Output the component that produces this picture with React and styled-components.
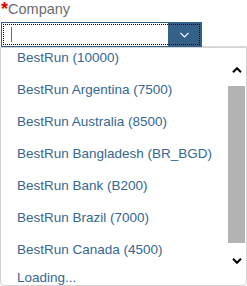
import styled, { createGlobalStyle } from 'styled-components'

const GlobalStyle = createGlobalStyle`
  html, body {
    margin: 0;
    padding: 0;
    background: #ffffff;
  }
  body {
    font-family: "Liberation Sans", Arial, sans-serif;
  }
`

const Field = styled.div`
  width: 247px;
  height: 286px;
  overflow: hidden;
  display: flex;
  flex-direction: column;
`

const Label = styled.label`
  display: flex;
  align-items: flex-start;
  height: 22px;
  padding-left: 1px;
  box-sizing: border-box;
  padding-top: 1px;
  font-size: 14.5px;
  line-height: 17px;
  color: #6a6d70;
`

const Required = styled.span`
  color: #e00000;
  font-size: 18px;
  font-weight: bold;
  line-height: 18px;
  margin-top: -1px;
`

const ComboRow = styled.div`
  display: flex;
  align-items: flex-end;
`

const ComboBox = styled.div`
  display: flex;
  width: 199px;
  height: 23px;
  margin-left: 1px;
  border: 1px solid #346187;
  background: #ffffff;
  outline: 1px dotted #000000;
  outline-offset: -3px;
`

const Input = styled.div`
  flex: 1;
  display: flex;
  align-items: center;
  padding-left: 9px;
`

const Caret = styled.span`
  width: 1px;
  height: 15px;
  background: #6a6d70;
`

const ArrowButton = styled.div`
  width: 33px;
  display: flex;
  align-items: center;
  justify-content: center;
  background: #346187;
`

const Rule = styled.div`
  flex: 1;
  height: 1px;
  background: #dcdcdc;
`

const Popup = styled.div`
  display: flex;
  width: 245px;
  height: 237px;
  border: 1px solid #d4d4d4;
  border-radius: 0 0 4px 4px;
  background: #ffffff;
  overflow: hidden;
`

const List = styled.ul`
  flex: 1;
  list-style: none;
  margin: 0;
  padding: 0;
  overflow: hidden;
`

const Items = styled.div`
  margin-top: -6px;
`

const Item = styled.li`
  height: ${p => (p.$loading ? '24px' : '32px')};
  padding-left: 16px;
  font-size: 13.5px;
  line-height: ${p => (p.$loading ? '24px' : '32px')};
  color: #346792;
  white-space: nowrap;
`

const Scrollbar = styled.div`
  width: 17px;
  display: flex;
  flex-direction: column;
  margin-right: 1px;
`

const ScrollArrow = styled.div`
  height: 38px;
  display: flex;
  align-items: ${p => (p.$down ? 'flex-start' : 'flex-end')};
  justify-content: center;
  padding: ${p => (p.$down ? '11px 0 0' : '0 0 13px')};
  box-sizing: border-box;
`

const Track = styled.div`
  flex: 1;
  display: flex;
  flex-direction: column;
`

const Thumb = styled.div`
  height: 157px;
  background: #b3b3b3;
`

const Chevron = ({ up, color = '#000', width = 10, height = 6, stroke = 2 }) => (
  <svg width={width} height={height} viewBox="0 0 10 6">
    <path
      d={up ? 'M1 5.2 L5 1.2 L9 5.2' : 'M1 0.8 L5 4.8 L9 0.8'}
      fill="none"
      stroke={color}
      strokeWidth={stroke}
    />
  </svg>
)

const companies = [
  'BestRun (10000)',
  'BestRun Argentina (7500)',
  'BestRun Australia (8500)',
  'BestRun Bangladesh (BR_BGD)',
  'BestRun Bank (B200)',
  'BestRun Brazil (7000)',
  'BestRun Canada (4500)',
]

export default function App() {
  return (
    <>
      <GlobalStyle />
      <Field>
        <Label>
          <Required>*</Required>Company
        </Label>
        <ComboRow>
          <ComboBox>
            <Input>
              <Caret />
            </Input>
            <ArrowButton>
              <Chevron color="#ffffff" width={11} height={6} stroke={1.2} />
            </ArrowButton>
          </ComboBox>
          <Rule />
        </ComboRow>
        <Popup>
          <List>
            <Items>
              {companies.map(name => (
                <Item key={name}>{name}</Item>
              ))}
              <Item $loading>Loading...</Item>
            </Items>
          </List>
          <Scrollbar>
            <ScrollArrow>
              <Chevron up />
            </ScrollArrow>
            <Track>
              <Thumb />
            </Track>
            <ScrollArrow $down>
              <Chevron />
            </ScrollArrow>
          </Scrollbar>
        </Popup>
      </Field>
    </>
  )
}
